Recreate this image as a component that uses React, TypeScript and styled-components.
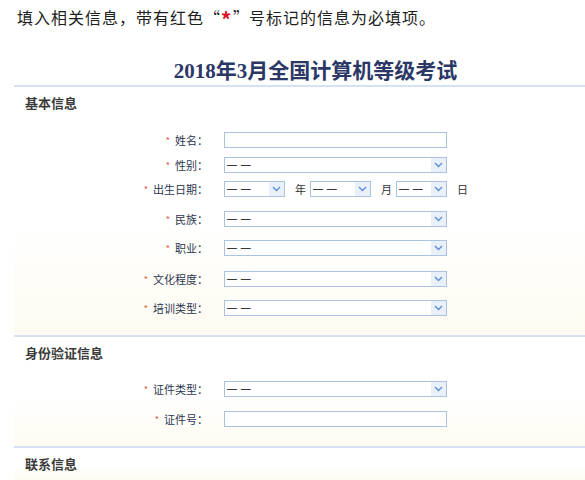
import React from 'react'
import styled, { createGlobalStyle } from 'styled-components'

const GlobalStyle = createGlobalStyle`
  body {
    margin: 0;
    background: #fff;
    font-family: "Noto Sans CJK SC", "Noto Sans", sans-serif;
  }
`

const Page = styled.div`
  width: 585px;
  padding: 7px 0 0 14px;
  box-sizing: border-box;
  overflow: hidden;
`

const Notice = styled.div`
  padding-left: 3px;
  font-size: 16px;
  letter-spacing: 1px;
  line-height: 21px;
  color: #1e1e1e;
  white-space: nowrap;
`

const Quote = styled.span<{ $open?: boolean }>`
  display: inline-block;
  width: 16px;
  text-align: ${({ $open }) => ($open ? 'right' : 'left')};
`

const RedStar = styled.span`
  display: inline-block;
  width: 13px;
  text-align: center;
  color: #e0141e;
  font-weight: bold;
  font-size: 21px;
  line-height: 16px;
  vertical-align: -4px;
`

const Title = styled.h1`
  margin: 29px 0 0;
  padding-left: 32px;
  text-align: center;
  font-family: "Liberation Serif", "Noto Sans CJK SC", serif;
  font-size: 21px;
  line-height: 28px;
  font-weight: bold;
  color: #2b3866;
`

const Section = styled.div<{ $pad: number }>`
  border-top: 2px solid #d4e2f4;
  padding-bottom: ${({ $pad }) => $pad}px;
  background: linear-gradient(to bottom, #ffffff 55%, #fdfbf1 100%);
`

const SectionHead = styled.div`
  height: 32px;
  line-height: 32px;
  padding-left: 11px;
  font-size: 13px;
  font-weight: bold;
  color: #3a3a3a;
`

const Row = styled.div<{ $space: number }>`
  display: flex;
  align-items: center;
  height: 24px;
  margin-top: ${({ $space }) => $space}px;
`

const Label = styled.div`
  width: 194px;
  flex-shrink: 0;
  text-align: right;
  font-size: 11px;
  color: #2c3650;
  padding-right: 16px;
`

const Star = styled.span`
  color: #e2513f;
  font-size: 9px;
  margin-right: 5px;
  vertical-align: 1px;
`

const TextBox = styled.div<{ $w: number }>`
  width: ${({ $w }) => $w}px;
  height: 16px;
  box-sizing: border-box;
  border: 1px solid #aac3e3;
  background: #fff;
`

const SelectBox = styled.div<{ $w: number }>`
  display: flex;
  width: ${({ $w }) => $w}px;
  height: 16px;
  box-sizing: border-box;
  border: 1px solid #aac3e3;
  background: #fff;
`

const SelectValue = styled.div`
  flex: 1;
  padding-left: 2px;
  font-family: "Liberation Sans", sans-serif;
  font-size: 10px;
  line-height: 14px;
  letter-spacing: 0.5px;
  color: #000;
`

const Arrow = styled.div`
  width: 15px;
  display: flex;
  align-items: center;
  justify-content: center;
  background: #e9f0fa;
`

const Unit = styled.span`
  font-size: 11px;
  color: #333;
  margin: 0 4px 0 10px;
`

const Select = ({ w }: { w: number }) => (
  <SelectBox $w={w}>
    <SelectValue>— —</SelectValue>
    <Arrow>
      <svg width="9" height="6" viewBox="0 0 9 6">
        <polyline points="1,1 4.5,4.5 8,1" fill="none" stroke="#5b8fd8" strokeWidth="1.4" />
      </svg>
    </Arrow>
  </SelectBox>
)

const Field = ({ label, space, children }: { label: string; space: number; children: React.ReactNode }) => (
  <Row $space={space}>
    <Label>
      <Star>*</Star>
      {label}：
    </Label>
    {children}
  </Row>
)

const App = () => (
  <Page>
    <GlobalStyle />
    <Notice>
      填入相关信息，带有红色<Quote $open>“</Quote>
      <RedStar>*</RedStar>
      <Quote>”</Quote>号标记的信息为必填项。
    </Notice>
    <Title>2018年3月全国计算机等级考试</Title>
    <Section $pad={15}>
      <SectionHead>基本信息</SectionHead>
      <Field label="姓名" space={9}>
        <TextBox $w={223} />
      </Field>
      <Field label="性别" space={1}>
        <Select w={223} />
      </Field>
      <Field label="出生日期" space={0}>
        <Select w={61} />
        <Unit>年</Unit>
        <Select w={61} />
        <Unit>月</Unit>
        <Select w={51} />
        <Unit>日</Unit>
      </Field>
      <Field label="民族" space={6}>
        <Select w={223} />
      </Field>
      <Field label="职业" space={5}>
        <Select w={223} />
      </Field>
      <Field label="文化程度" space={7}>
        <Select w={223} />
      </Field>
      <Field label="培训类型" space={5}>
        <Select w={223} />
      </Field>
    </Section>
    <Section $pad={15}>
      <SectionHead>身份验证信息</SectionHead>
      <Field label="证件类型" space={8}>
        <Select w={223} />
      </Field>
      <Field label="证件号" space={6}>
        <TextBox $w={223} />
      </Field>
    </Section>
    <Section $pad={0}>
      <SectionHead>联系信息</SectionHead>
    </Section>
  </Page>
)

export default App
